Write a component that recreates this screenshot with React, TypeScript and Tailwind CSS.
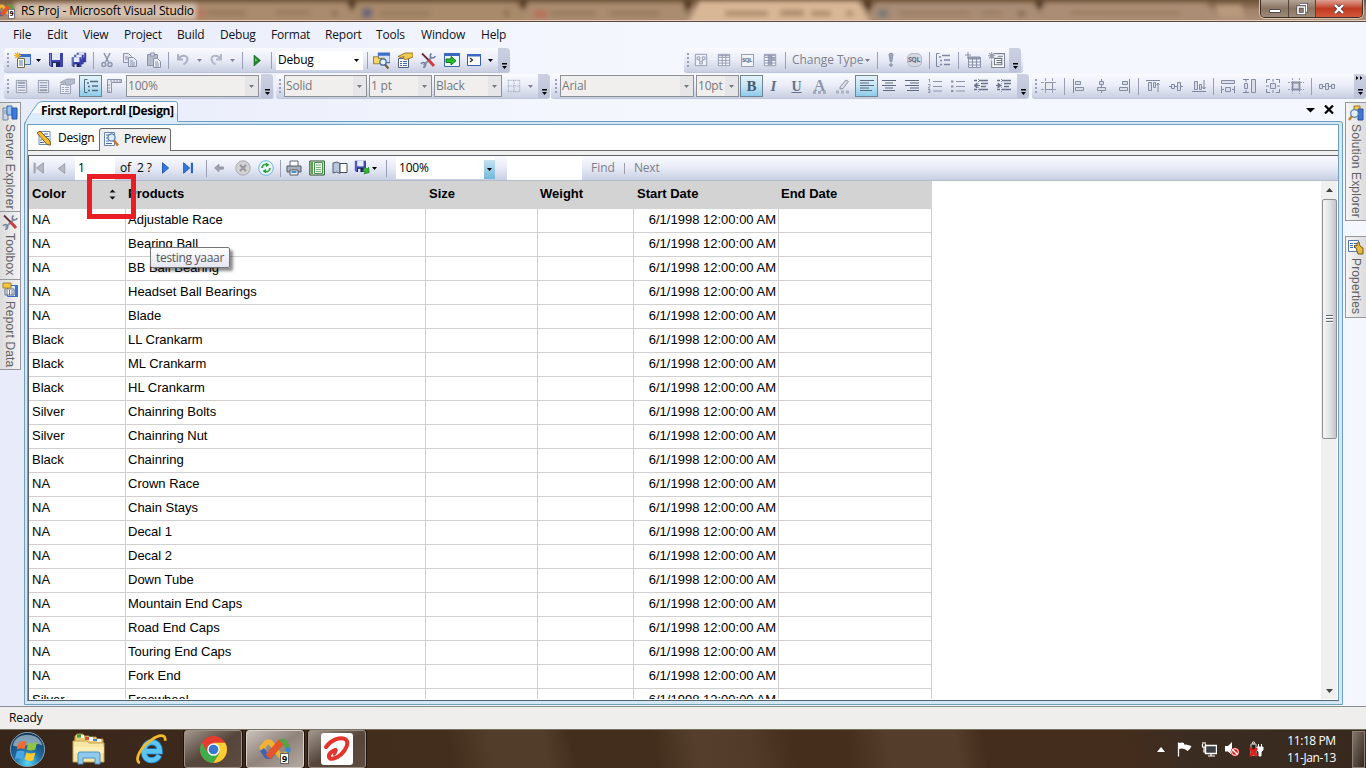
import React from "react";

type Kids = { children?: React.ReactNode };

const UI = "font-['Open_Sans','Noto_Sans',sans-serif]";

/* ---------- shared toolbar parts ---------- */

function Slot({ w, children }: { w: string } & Kids) {
  return <div className={`flex h-full shrink-0 items-center justify-center ${w}`}>{children}</div>;
}

function Ico({ children, s = "size-4" }: { s?: string } & Kids) {
  return (
    <svg viewBox="0 0 16 16" className={`shrink-0 ${s}`} fill="none" stroke="#8b92ab" strokeWidth="1">
      {children}
    </svg>
  );
}

function Sep({ w }: { w: string }) {
  return (
    <Slot w={w}>
      <div className="h-[17px] w-px bg-[#9a9fb5]" />
    </Slot>
  );
}

function Grip({ w }: { w: string }) {
  return (
    <Slot w={w}>
      <div className="flex flex-col gap-[2px]">
        {[0, 1, 2, 3].map((i) => (
          <div key={i} className="size-[2px] bg-[#9a9dba]" />
        ))}
      </div>
    </Slot>
  );
}

function Arrow({ color = "#000" }: { color?: string }) {
  return (
    <svg viewBox="0 0 5 3" className="h-[3px] w-[5px] shrink-0" fill={color}>
      <path d="M0 0h5L2.5 3z" />
    </svg>
  );
}

function Overflow({ w, dots }: { w: string; dots?: boolean }) {
  return (
    <div className={`flex h-full shrink-0 flex-col items-center justify-end rounded-r-[3px] bg-linear-to-b from-[#ccd1e1] to-[#bcc3d9] pb-[2px] ${w}`}>
      <svg viewBox="0 0 8 21" className="h-[21px] w-2" fill="#000">
        {dots && <path d="M0 1l2.4 2L0 5zM4 1l2.4 2L4 5z" />}
        <path d="M2 14h5v1.4H2zM2 17h5l-2.5 3z" />
      </svg>
    </div>
  );
}

function Strip({ w, children }: { w: string } & Kids) {
  return (
    <div className={`flex h-[25px] shrink-0 items-center overflow-hidden rounded-[3px] border-b border-[#bfc5da] bg-linear-to-b from-[#fafbff] via-[#e9ecf7] to-[#c9cfe2] ${w}`}>
      {children}
    </div>
  );
}

function GrayCombo({ w, text }: { w: string; text: string }) {
  return (
    <div className={`flex h-[22px] shrink-0 items-stretch border border-[#8e9097] bg-[#f0efee] ${w}`}>
      <div className="flex-1 pl-[1px] text-[12px] leading-[19px] tracking-[-0.2px] text-[#76777c]">{text}</div>
      <div className="flex w-[13px] items-center justify-center bg-[#e6e6e8]">
        <Arrow color="#77797f" />
      </div>
    </div>
  );
}

function Lit({ children }: Kids) {
  return (
    <div className="flex h-[22px] w-[23px] items-center justify-center border border-[#6e8494] bg-linear-to-b from-[#e5f2fa] via-[#c3e4f3] to-[#8ccbe8]">
      {children}
    </div>
  );
}

/* ---------- icons ---------- */

const NewProject = () => (
  <svg viewBox="0 0 17 16" className="h-4 w-[17px]">
    <path d="M4.500 2.500h12v10h-12z" fill="#c9dcf7" stroke="#416bb8" />
    <path d="M4 2h13v3H4z" fill="#3c6cc9" />
    <path d="M3.500 6.500h7v9h-7z" fill="#fffdf0" stroke="#746a43" />
    <path d="M5 9h4M5 11h4M5 13h4" stroke="#4a71b5" />
    <path d="M3.500 0v7M0 3.500h7M1 1l5 5M6 1L1 6" stroke="#f0b429" strokeWidth="1.200" />
  </svg>
);

const Floppy = ({ dx = 0, dy = 0, k = 1 }: { dx?: number; dy?: number; k?: number }) => (
  <g transform={`translate(${dx} ${dy}) scale(${k})`} stroke="none">
    <path d="M1 1h14v14H3l-2-2z" fill="#3d44ae" />
    <path d="M2 2h1v11H2z" fill="#8188dc" />
    <path d="M4 1h8v7H4z" fill="#e4eaff" />
    <path d="M4 10h8v5H4z" fill="#20265f" />
    <path d="M5 11h3v4H5z" fill="#d9def4" />
  </g>
);

const Save = () => <Ico><Floppy /></Ico>;
const SaveAll = () => (
  <Ico>
    <Floppy dx={5} dy={0} k={0.68} />
    <Floppy dx={2.500} dy={2} k={0.68} />
    <Floppy dx={0} dy={4.500} k={0.7} />
  </Ico>
);

const Cut = () => (
  <Ico>
    <path d="M5 1l4.500 9M11 1L6.500 10" strokeWidth="1.500" />
    <circle cx="4.800" cy="12.500" r="2" strokeWidth="1.400" />
    <circle cx="11" cy="12.500" r="2" strokeWidth="1.400" />
  </Ico>
);
const Copy = () => (
  <Ico>
    <path d="M1.500 1.500h5l3 3v6h-8z" fill="#e5e8f2" />
    <path d="M6.500 5.500h5l3 3v6h-8z" fill="#e5e8f2" />
    <path d="M8 9h3M8 11h5M8 13h5M3 5h3M3 7h3" />
  </Ico>
);
const Paste = () => (
  <Ico>
    <path d="M1.500 2.500h10v11h-10z" fill="#b7bccd" />
    <path d="M4.500 1h4v3h-4z" fill="#d8dbe7" />
    <path d="M7.500 6.500h4l3 3v6h-7z" fill="#eef0f7" />
    <path d="M9 10h3M9 12h4M9 14h4" />
  </Ico>
);
const Undo = () => (
  <Ico>
    <path d="M3 2v5.500h5M3.500 7C6 2 13 3 12.500 7.500c-.2 2-1.500 3.500-4 5" strokeWidth="2" stroke="#a9b0c4" />
  </Ico>
);
const Redo = () => (
  <Ico>
    <path d="M13 2v5.500H8M12.500 7C10 2 3 3 3.500 7.500c.2 2 1.500 3.500 4 5" strokeWidth="2" stroke="#b0b6c9" />
  </Ico>
);
const Play = () => (
  <Ico>
    <path d="M5 3l6.500 5.500L5 14z" fill="#22852b" stroke="#14661c" strokeWidth=".6" />
    <path d="M6 6l2.500 2.500L6 9.500z" fill="#73cf72" stroke="none" />
  </Ico>
);
const FindFolder = () => (
  <Ico s="size-[17px]">
    <path d="M5 1h11v9H5z" fill="#d6e4fa" stroke="#426cb9" />
    <path d="M5 1h11v2.500H5z" fill="#3d70c8" stroke="none" />
    <path d="M.5 4.500h4l1 1.500h5v5H.5z" fill="#f8d76b" stroke="#a28232" />
    <circle cx="9.500" cy="9.500" r="3" fill="#e5f4ff" stroke="#5577a8" strokeWidth="1.300" />
    <path d="M11.500 12l3 3.500" stroke="#70573c" strokeWidth="2" />
  </Ico>
);
const PropHand = ({ gray }: { gray?: boolean }) => (
  <Ico>
    <path d="M1.500 6.500h10v9h-10z" fill={gray ? "#eef0f6" : "#fff"} stroke={gray ? "#9ba1b5" : "#525f7d"} />
    <path d="M3 9.500h2M6 9.500h4M3 11.500h2M6 11.500h4M3 13.500h2M6 13.500h4" stroke={gray ? "#a1a6b9" : "#476cad"} />
    <path d="M1 4.500l3-1.500 4-2h8v4l-5 2-3 .5-2-1 1-2-3 1z" fill={gray ? "#b6bbca" : "#f1ca50"} stroke={gray ? "#959bad" : "#86651e"} strokeWidth=".8" />
  </Ico>
);
const Wrench = () => (
  <Ico>
    <path d="M3.500 13.500L12 5" stroke="#8b9cb6" strokeWidth="2.200" />
    <path d="M11.500 1.500c-2 1.500-1.500 4.500 0 4.500s3.500 0 3.500-2" stroke="#73859e" strokeWidth="1.600" />
    <path d="M1 12c1-2 4-2 4.500 0s-1 3.500-2.500 3.500" stroke="#73859e" strokeWidth="1.600" />
    <path d="M2 1.500l6.500 6.500" stroke="#6b2c3a" strokeWidth="1.800" />
    <path d="M8.500 8l5.500 6" stroke="#cd3b43" strokeWidth="3" />
  </Ico>
);
const StartPage = () => (
  <Ico>
    <path d="M.5 2.500h15v12H.5z" fill="#eef5ff" stroke="#3b66aa" />
    <path d="M0 1h16v3H0z" fill="#3c67c0" stroke="none" />
    <path d="M2 7h5V4.500l5 4.200-5 4.300v-2.500H2z" fill="#29c02b" stroke="#107819" />
  </Ico>
);
const CommandWin = () => (
  <Ico>
    <path d="M1.500 2.500h13v11h-13z" fill="#fff" stroke="#3b5cac" />
    <path d="M1 2h14v2.500H1z" fill="#3b69c8" stroke="none" />
    <path d="M4 6l2.500 2L4 10" stroke="#222" strokeWidth="1.200" />
  </Ico>
);
const Diagram = () => (
  <Ico s="size-[14px]">
    <path d="M1.500 1.500h13v13h-13z" fill="#f0f2f8" />
    <path d="M3.500 4.500h3v3h-3zM9.500 4.500h3v3h-3zM6.500 9.500h3v3h-3zM5 7.500l2 2M11 7.500l-2 2" />
  </Ico>
);
const GridIcon = ({ dark }: { dark?: boolean }) => (
  <Ico s="size-[14px]">
    <path d="M1.500 1.500h13v13h-13z" fill="#f5f6fa" />
    {dark && <path d="M6 2h4v12H6zM10 5h4v3h-4z" fill="#a3a9bc" stroke="none" />}
    <path d="M2 5h12M2 8.500h12M2 11.500h12M6 2v12M10 2v12M2 3h12" />
  </Ico>
);
const SqlBox = () => (
  <div className="flex h-[13px] w-[13px] items-center justify-center overflow-hidden border border-[#9ba1b5] bg-[#f0f2f8] text-[6px] font-bold tracking-[-0.5px] text-[#656c82]">SQL</div>
);
const SqlCheck = () => (
  <div className="flex h-[14px] w-[15px] items-center justify-center rounded-[5px] border border-[#b3b8c8] bg-[#d5d9e4] text-[7px] font-bold tracking-[-0.4px] text-[#666d82]">SQL</div>
);
const Tree = ({ c = "#7d87a2" }: { c?: string }) => (
  <Ico>
    <path d="M4.500 1.500h-3v13h3" stroke={c} />
    <path d="M4 5h2M5 8.500h2M5 12.500h2M7 3.500h8M9 8h6M9 12.500h6" stroke={c} strokeWidth="1.300" />
  </Ico>
);
const AddTable = () => (
  <Ico>
    <path d="M3.500 5.500h12v10h-12z" fill="#edeff6" />
    <path d="M3 5h12v2H3z" fill="#9197ab" />
    <path d="M4 10h11M4 13h11M7.500 7v8M11.500 7v8M3 0v6M0 3h6" />
  </Ico>
);
const AddGroup = () => (
  <Ico s="size-[17px]">
    <path d="M5.500 1.500h10v13h-12V8" fill="#fff" stroke="#7c8295" />
    <path d="M6 6h7v6H6zM8 8h5M8 10h5M9 4h5" stroke="#6c7387" />
    <path d="M3.500 0v7M0 3.500h7M1 1l5 5M6 1L1 6" stroke="#969cae" />
  </Ico>
);
const Page = ({ flip }: { flip?: boolean }) => (
  <Ico s="size-[15px]">
    <path d="M2.500 1.500h11v13h-11z" fill="#e7e9f1" stroke="#9499ac" />
    <path d={flip ? "M4 11h8v2H4z" : "M4 3h8v2H4z"} fill="#959bb0" stroke="none" />
    <path d="M4 7h8M4 9h8" />
    {flip ? <path d="M4 4h8" /> : <path d="M4 12h8" />}
  </Ico>
);
const Ruler = () => (
  <Ico>
    <path d="M1.500 1.500h14v3h-10v10h-4z" fill="#e7e9f1" />
    <path d="M5 2v2M8 2v2M11 2v2M14 2v2M2 7h2M2 10h2M2 13h2" />
  </Ico>
);
const Borders = () => (
  <Ico s="size-[14px]">
    <path d="M1 1.500h14M1 8h14M1 14.500h14M1.500 1v14M8 1v14M14.500 1v14" strokeDasharray="1 1" />
  </Ico>
);
const Lines = ({ kind }: { kind: "l" | "c" | "r" }) => (
  <Ico>
    <path
      stroke="#5b6880"
      strokeWidth="1.200"
      d={
        kind === "l"
          ? "M1 2.500h14M1 5h9M1 7.500h14M1 10h9M1 12.500h12"
          : kind === "c"
          ? "M1 2.500h14M4 5h8M1 7.500h14M4 10h8M2 12.500h12"
          : "M1 2.500h14M6 5h9M1 7.500h14M6 10h9M3 12.500h12"
      }
    />
  </Ico>
);
const ListIcon = ({ num }: { num?: boolean }) => (
  <Ico>
    <path d="M6 3.500h9M6 8.500h9M6 13h9" />
    {num ? (
      <path d="M1.500 2l1-1v3.500M1 6.500h2v1.500L1 10h2M1 11.500h2v3H1M1.500 13H3" strokeWidth=".9" />
    ) : (
      <path d="M1 3.500h2.500M1 8.500h2.500M1 13h2.500" strokeWidth="2" />
    )}
  </Ico>
);
const Indent = ({ right }: { right?: boolean }) => (
  <Ico>
    <path d="M1 2.500h3M6 2.500h9M8 5.500h7M8 8.500h5M6 11.500h9M1 11.500h3" stroke="#69738b" strokeWidth="1.400" />
    <path d="M5.500 1v14" strokeDasharray="1 1" />
    <path d={right ? "M2 5L5 7.500 2 10zM0 7.500h3" : "M4 5L1 7.500 4 10zM3 7.500h4"} fill="#69738b" stroke="#69738b" />
  </Ico>
);
const Brush = () => (
  <Ico>
    <path d="M5 9l6-7 2.500 1.500L8 10.500l-3 .5z" fill="#dcdfe9" />
    <path d="M1 12.500h3v3H1zM6 12.500h3v3H6zM11 12.500h3v3h-3z" fill="#adb2c2" stroke="none" />
  </Ico>
);
const FontColor = () => (
  <div className="flex flex-col items-center">
    <span className="h-[12px] font-['Liberation_Serif',serif] text-[16px] leading-[13px] font-bold text-[#8f96ab]">A</span>
    <div className="flex gap-[2px]">
      <div className="size-[3px] bg-[#a7acbe]" />
      <div className="size-[3px] bg-[#a7acbe]" />
      <div className="size-[3px] bg-[#a7acbe]" />
    </div>
  </div>
);
const Align = ({ d, f }: { d: string; f?: string }) => (
  <Ico>
    <path d={d} stroke="#7f869f" />
    {f && <path d={f} fill="#dadeea" stroke="#858ca3" />}
  </Ico>
);
const SnapGrid = ({ fat }: { fat?: boolean }) => (
  <Ico>
    <path d="M4.500 0v16M11.500 0v16M0 4.500h16M0 11.500h16" strokeDasharray={fat ? "2 1" : "3 1"} stroke="#9ba1b5" />
    <path d="M4.500 4.500h7v7h-7z" fill={fat ? "#d9dce7" : "#e9ebf3"} stroke="#868da4" strokeWidth={fat ? 1.800 : 1} />
  </Ico>
);

/* ---------- window title ---------- */

function VsLogo({ s }: { s: string }) {
  return (
    <svg viewBox="0 0 32 22" className={s} fill="none" strokeWidth="5" strokeLinejoin="round">
      <path d="M5 12L3 9l5-5.500h3l6 7" stroke="#f2b233" />
      <path d="M3 11l5 7h3l5-6" stroke="#3e63b8" />
      <path d="M20 5l2-2h3l4 6" stroke="#57a244" />
      <path d="M29 9v3l-4 6" stroke="#3f86cf" />
      <path d="M16 11l6 7h3l3-4" stroke="#e8b62e" />
      <path d="M9 18.500L22 3.500" stroke="#e4552a" strokeWidth="6.500" />
    </svg>
  );
}

function TitleBar() {
  return (
    <header className="relative flex h-[22px] shrink-0 overflow-hidden border-b border-[#5c4a42] bg-linear-to-b from-[#6e5338] via-[#a1826a] to-[#ab8f76]">
      <svg viewBox="0 0 1366 21" className="absolute inset-0 h-[21px] w-[1366px]">
        <defs>
          <filter id="soft" x="-10%" y="-100%" width="120%" height="300%"><feGaussianBlur stdDeviation="2.500" /></filter>
        </defs>
        <g filter="url(#soft)">
          <path d="M185 3h162l10 20H180z" fill="#aa8b6d" />
          <path d="M354 3h162l10 20H350z" fill="#a98a6b" />
          <path d="M526 3h160l8 20H522z" fill="#ab8c70" />
          <path d="M699 1h160l12 24H688z" fill="#d8b796" />
          <path d="M876 3h158l8 20H868z" fill="#a98d74" />
          <path d="M1045 3h162l10 20h-175z" fill="#ab8d74" />
          <path d="M1215 5h26l4 13h-26z" fill="#b99a7c" />
          <path d="M346 0h12l-6 12zM519 0h10l-5 11zM692 0h-10l5 15zM862 0h10l-3 14zM1034 0h10l-5 11z" fill="#4f351c" />
          <path d="M206 10h40v6h-40zM276 10h34v5h-34zM380 11h50v5h-50zM550 11h46v5h-46zM610 11h50v5h-50zM900 11h70v4h-70zM982 11h20v4h-20zM1070 11h110v4h-110z" fill="#917359" opacity=".7" />
          <path d="M725 11h43v5h-43zM780 10h24v6h-24zM811 11h20v5h-20zM846 11h7v5h-7z" fill="#9a7759" opacity=".75" />
          <path d="M197 9h7v9h-7zM534 10h13v8h-13z" fill="#bb6a55" opacity=".8" />
          <path d="M362 8h10v10h-10z" fill="#6d6679" />
          <path d="M878 9h10v9h-10z" fill="#7e7a76" />
          <path d="M504 11h5v5h-5zM332 11h5v5h-5zM1018 11h7v5h-7z" fill="#846850" />
          <path d="M14 3h182v16H14z" fill="#d5c0ae" />
        </g>
        <path d="M0 20.500h1366" stroke="#e4cfbc" />
      </svg>
      <div className="relative flex h-[21px] flex-1 items-center">
        <div className="relative w-[21px]">
          <VsLogo s="-ml-1 h-[15px] w-[19px]" />
          <span className="absolute top-[6px] left-[8px] h-[10px] w-[7px] border border-[#777] bg-white text-center text-[7px] leading-[8px] font-bold">9</span>
        </div>
        <span className="text-[12px] tracking-[-0.14px] text-black">RS Proj - Microsoft Visual Studio</span>
      </div>
      <div className="relative mr-[3px] flex h-[18px] overflow-hidden rounded-b-[5px] border border-t-0 border-[#3e2e26] shadow-[0_0_0_1px_#d4c0ad]">
        <div className="flex w-7 items-center justify-center border-r border-[#54443a] bg-linear-to-b from-[#b5a598] via-[#8a7462] to-[#9d8a79]">
          <div className="mt-1 h-[4px] w-[12px] rounded-[1px] border border-[#4d4b51] bg-white" />
        </div>
        <div className="flex w-[27px] items-center justify-center border-r border-[#54443a] bg-linear-to-b from-[#b5a598] via-[#8a7462] to-[#9d8a79]">
          <svg viewBox="0 0 12 12" className="size-3" fill="none">
            <path d="M4 1.500h6.500V8H9" stroke="#494950" strokeWidth="3" />
            <path d="M4 1.500h6.500V8H9" stroke="#fff" strokeWidth="1.400" />
            <path d="M2 4h6.500v6.500H2z" stroke="#494950" strokeWidth="3" />
            <path d="M2 4h6.500v6.500H2z" stroke="#fff" strokeWidth="1.600" />
          </svg>
        </div>
        <div className="flex w-[46px] items-center justify-center bg-linear-to-b from-[#dda092] via-[#c03a20] to-[#d4573a]">
          <svg viewBox="0 0 12 10" className="h-[10px] w-3">
            <path d="M2 1l8 8M10 1L2 9" stroke="#52434b" strokeWidth="4" />
            <path d="M2 1l8 8M10 1L2 9" stroke="#fff" strokeWidth="2.400" />
          </svg>
        </div>
      </div>
    </header>
  );
}

/* ---------- menu + toolbars ---------- */

function MenuBar() {
  return (
    <nav className="flex h-[26px] shrink-0 pl-[13px] text-[12px] leading-[26px] tracking-[-0.2px] text-[#12121c]">
      <span className="w-[34px]">File</span>
      <span className="w-[36px]">Edit</span>
      <span className="w-[41px]">View</span>
      <span className="w-[53px]">Project</span>
      <span className="w-[43px]">Build</span>
      <span className="w-[51px]">Debug</span>
      <span className="w-[54px]">Format</span>
      <span className="w-[51px]">Report</span>
      <span className="w-[45px]">Tools</span>
      <span className="w-[60px]">Window</span>
      <span>Help</span>
    </nav>
  );
}

function ToolbarTop() {
  return (
    <div className="flex h-[26px] shrink-0 pl-1">
      <Strip w="w-[506px]">
        <Grip w="w-[7px]" />
        <Slot w="w-[22px]"><NewProject /></Slot>
        <Slot w="w-[10px]"><Arrow /></Slot>
        <Slot w="w-[26px]"><Save /></Slot>
        <Slot w="w-[19px]"><SaveAll /></Slot>
        <Sep w="w-[11px]" />
        <Slot w="w-4"><Cut /></Slot>
        <Slot w="w-[30px]"><Copy /></Slot>
        <Slot w="w-[18px]"><Paste /></Slot>
        <Sep w="w-[11px]" />
        <Slot w="w-[18px]"><Undo /></Slot>
        <Slot w="w-[14px]"><Arrow color="#80869b" /></Slot>
        <Slot w="w-5"><Redo /></Slot>
        <Slot w="w-[13px]"><Arrow color="#80869b" /></Slot>
        <Sep w="w-[7px]" />
        <Slot w="w-[21px]"><Play /></Slot>
        <Sep w="w-[9px]" />
        <div className="flex h-[19px] w-[87px] shrink-0 items-center bg-white pr-1 pl-[2px]">
          <span className="flex-1 text-[12px] tracking-[-0.2px]">Debug</span>
          <Arrow />
        </div>
        <Sep w="w-[9px]" />
        <Slot w="w-[19px]"><FindFolder /></Slot>
        <Slot w="w-[28px]"><PropHand /></Slot>
        <Slot w="w-[18px]"><Wrench /></Slot>
        <Slot w="w-[29px]"><StartPage /></Slot>
        <Slot w="w-4"><CommandWin /></Slot>
        <Slot w="w-[16px]"><Arrow /></Slot>
        <Overflow w="w-[12px]" />
      </Strip>
      <Strip w="ml-[174px] w-[339px]">
        <Grip w="w-[7px]" />
        <Slot w="w-5"><Diagram /></Slot>
        <Slot w="w-[26px]"><GridIcon /></Slot>
        <Slot w="w-5"><SqlBox /></Slot>
        <Slot w="w-[26px]"><GridIcon dark /></Slot>
        <Sep w="w-[5px]" />
        <div className="w-[75px] shrink-0 pl-1 text-[12px] tracking-[-0.05px] whitespace-nowrap text-[#7f828d]">Change Type</div>
        <Slot w="w-[9px]"><Arrow color="#777b88" /></Slot>
        <Sep w="w-[10px]" />
        <Slot w="w-[18px]">
          <Ico><path d="M6 2.500C6 .8 10 .8 10 2.500L8.700 10H7.300z" fill="#a0a6b9" /><circle cx="8" cy="13" r="1.300" fill="#a0a6b9" /></Ico>
        </Slot>
        <Slot w="w-[28px]"><SqlCheck /></Slot>
        <Sep w="w-[3px]" />
        <Slot w="w-6"><Tree /></Slot>
        <Sep w="w-[7px]" />
        <Slot w="w-[22px]"><AddTable /></Slot>
        <Slot w="w-6"><AddGroup /></Slot>
        <div className="w-px shrink-0" />
        <Overflow w="w-[12px]" />
      </Strip>
    </div>
  );
}

function ToolbarBottom() {
  return (
    <div className="flex h-[27px] shrink-0 pl-1">
      <Strip w="w-[270px]">
        <Grip w="w-[7px]" />
        <Slot w="w-5"><Page /></Slot>
        <Slot w="w-6"><Page flip /></Slot>
        <Slot w="w-6"><PropHand gray /></Slot>
        <Slot w="w-[23px]"><Lit><Tree c="#566a80" /></Lit></Slot>
        <Slot w="w-6"><Ruler /></Slot>
        <GrayCombo w="w-[133px]" text="100%" />
        <div className="w-[2px] shrink-0" />
        <Overflow w="w-[12px]" />
      </Strip>
      <Strip w="ml-[2px] w-[274px]">
        <Grip w="w-2" />
        <GrayCombo w="w-[83px]" text="Solid" />
        <GrayCombo w="ml-[2px] w-[63px]" text="1 pt" />
        <GrayCombo w="ml-[2px] w-[68px]" text="Black" />
        <Slot w="w-6"><Borders /></Slot>
        <Slot w="w-2"><Arrow color="#7b8092" /></Slot>
        <div className="w-1 shrink-0" />
        <Overflow w="w-[12px]" />
      </Strip>
      <Strip w="ml-[1px] w-[478px]">
        <Grip w="w-[9px]" />
        <GrayCombo w="w-[134px]" text="Arial" />
        <GrayCombo w="ml-[2px] w-[43px]" text="10pt" />
        <Slot w="ml-[1px] w-[23px]"><Lit><b className="font-['Liberation_Serif',serif] text-[15px] text-[#48586e]">B</b></Lit></Slot>
        <Slot w="w-[21px]"><i className="font-['Liberation_Serif',serif] text-[15px] font-bold text-[#677189]">I</i></Slot>
        <Slot w="w-[25px]"><span className="font-['Liberation_Serif',serif] text-[14px] font-bold text-[#677189] underline">U</span></Slot>
        <Slot w="w-[21px]"><FontColor /></Slot>
        <Slot w="w-[25px]"><Brush /></Slot>
        <Slot w="w-[23px]"><Lit><Lines kind="l" /></Lit></Slot>
        <Slot w="w-[22px]"><Lines kind="c" /></Slot>
        <Slot w="w-6"><Lines kind="r" /></Slot>
        <Slot w="w-[22px]"><ListIcon num /></Slot>
        <Slot w="w-6"><ListIcon /></Slot>
        <Slot w="w-[22px]"><Indent /></Slot>
        <Slot w="w-6"><Indent right /></Slot>
        <div className="w-px shrink-0" />
        <Overflow w="w-[12px]" />
      </Strip>
      <Strip w="ml-[3px] w-[334px]">
        <Grip w="w-[7px]" />
        <Slot w="w-5"><SnapGrid /></Slot>
        <Sep w="w-[10px]" />
        <Slot w="w-[19px]"><Align d="M2.500 1v14" f="M4.500 3.500h5v3h-5zM4.500 9.500h8v3h-8z" /></Slot>
        <Slot w="w-[26px]"><Align d="M8.500 1v14" f="M6.500 3.500h4v3h-4zM4.500 9.500h8v3h-8z" /></Slot>
        <Slot w="w-[20px]"><Align d="M13.500 1v14" f="M6.500 3.500h5v3h-5zM3.500 9.500h8v3h-8z" /></Slot>
        <Sep w="w-[9px]" />
        <Slot w="w-[19px]"><Align d="M1 2.500h14M13 5v9M11.500 7L13 5l1.500 2" f="M3.500 4.500h3v8h-3zM8.500 4.500h2v5h-2z" /></Slot>
        <Slot w="w-[27px]"><Align d="M1 8.500h14" f="M3.500 6.500h3v4h-3zM9.500 4.500h3v8h-3z" /></Slot>
        <Slot w="w-[20px]"><Align d="M1 13.500h14M13 2v9M11.500 9L13 11l1.500-2" f="M3.500 3.500h3v8h-3zM8.500 6.500h2v5h-2z" /></Slot>
        <Sep w="w-[9px]" />
        <Slot w="w-[19px]"><Align d="M1.500 8v7M14.500 8v7M2 11.500h2M12 11.500h2" f="M1.500 2.500h13v3h-13zM5.500 9.500h5v4h-5z" /></Slot>
        <Slot w="w-[26px]"><Align d="M1 1.500h6M1 14.500h6M4 2v2M4 12v2" f="M9.500 1.500h4v13h-4zM2.500 5.500h3v5h-3z" /></Slot>
        <Slot w="w-[20px]"><Align d="M1.500 5V1.500H5M11 1.500h3.500V5M14.500 11v3.500H11M5 14.500H1.500V11M8 1v3M8 12v3M1 8h3M12 8h3" f="M5.500 5.500h5v5h-5z" /></Slot>
        <Slot w="w-[26px]"><SnapGrid fat /></Slot>
        <Sep w="w-[5px]" />
        <Slot w="w-[26px]"><Align d="M1 8.500h14" f="M.5 6.500h3v4h-3zM6.500 5.500h3v6h-3zM12.500 6.500h3v4h-3z" /></Slot>
        <div className="w-[14px] shrink-0" />
        <Overflow w="w-[12px]" dots />
      </Strip>
    </div>
  );
}

/* ---------- docked side tabs ---------- */

function SideTab({ h, right, text, icon }: { h: string; right?: boolean; text: string; icon: React.ReactNode }) {
  return (
    <div className={`flex shrink-0 flex-col items-center gap-[3px] border border-[#95979c] pt-[2px] ${right ? "w-[21px] border-r-0 bg-linear-to-r from-[#f5f5f5] to-[#dcdcdc]" : "w-[21px] border-l-0 bg-linear-to-r from-[#dcdcdc] to-[#f3f3f3]"} ${h}`}>
      {icon}
      <span className="font-['Liberation_Sans',sans-serif] text-[12px] leading-[14px] tracking-[0.15px] whitespace-nowrap text-[#5f6064] [writing-mode:vertical-rl]">{text}</span>
    </div>
  );
}

function LeftDock() {
  return (
    <aside className="flex w-6 shrink-0 flex-col pt-[1px]">
      <SideTab h="h-[110px] -mb-px" text="Server Explorer" icon={
        <Ico><path d="M1 3h5v12H1z" fill="#cbd5e3" stroke="#74839a" /><path d="M2 6h3M2 8h3" /><path d="M5 1h5v9H5z" fill="#9ac1f2" stroke="#356ab6" /><path d="M10 3h5v11h-5z" fill="#3d7be0" stroke="#2a57a6" /></Ico>
      } />
      <SideTab h="h-[69px] -mb-px" text="Toolbox" icon={<Wrench />} />
      <SideTab h="h-[91px]" text="Report Data" icon={
        <Ico><path d="M5.500 3.500h10v11h-10z" fill="#dbe8fd" stroke="#3e6bb9" /><path d="M13 3h3v12h-3z" fill="#3c73d2" stroke="none" /><path d="M3 7h9v6H3z" fill="#fff" stroke="#63718a" /><path d="M5 8v5M7.500 8v5M10 8v5" stroke="#63718a" /><path d="M1 1h8v5H1z" fill="#f2c93c" stroke="#a3812a" /></Ico>
      } />
    </aside>
  );
}

function RightDock() {
  return (
    <aside className="flex flex-1 flex-col items-end gap-[15px] pt-[1px]">
      <SideTab right h="h-[119px]" text="Solution Explorer" icon={
        <Ico><path d="M6 1h6v6H6z" fill="#f1c84a" stroke="#98772c" /><path d="M10 4h5v11h-5z" fill="#3f77d4" stroke="#2c559c" /><circle cx="6.500" cy="8.500" r="3.800" fill="#def0fd" stroke="#6284b0" strokeWidth="1.300" /><path d="M4 11l-3 4" stroke="#c57e2e" strokeWidth="2.200" /></Ico>
      } />
      <SideTab right h="h-[82px]" text="Properties" icon={
        <Ico><path d="M.5 1.500h10v11H.5z" fill="#fff" stroke="#5675aa" /><path d="M2 4.500h3M6 4.500h3M2 6.500h3M6 6.500h3M2 8.500h3M6 8.500h3" stroke="#3f69b3" /><path d="M8 9l-2-2 1-1 2 1V4l2-1 1 4 3 2v6h-5z" fill="#e8b83b" stroke="#745b25" /></Ico>
      } />
    </aside>
  );
}

/* ---------- report ---------- */

const rows: [string, string][] = [
  ["NA", "Adjustable Race"], ["NA", "Bearing Ball"], ["NA", "BB Ball Bearing"], ["NA", "Headset Ball Bearings"],
  ["NA", "Blade"], ["Black", "LL Crankarm"], ["Black", "ML Crankarm"], ["Black", "HL Crankarm"],
  ["Silver", "Chainring Bolts"], ["Silver", "Chainring Nut"], ["Black", "Chainring"], ["NA", "Crown Race"],
  ["NA", "Chain Stays"], ["NA", "Decal 1"], ["NA", "Decal 2"], ["NA", "Down Tube"],
  ["NA", "Mountain End Caps"], ["NA", "Road End Caps"], ["NA", "Touring End Caps"], ["NA", "Fork End"],
  ["Silver", "Freewheel"],
];

const cols = "grid grid-cols-[97px_300px_112px_96px_145px_153px]";

function ReportGrid() {
  const cell = "border-r border-b border-[#d0d0d0] pl-[2px]";
  return (
    <div className="relative h-[518px] w-[903px] font-['Liberation_Sans',Arial,sans-serif] text-[13px] text-black">
      <div className="h-full overflow-hidden">
        <div className={`${cols} h-[28px] bg-[#d3d3d3] leading-[25px] font-bold`}>
          <div className="pl-[3px]">Color</div>
          <div className="pl-[2px]">Products</div>
          <div className="pl-[3px]">Size</div>
          <div className="pl-[2px]">Weight</div>
          <div className="pl-[3px]">Start Date</div>
          <div className="pl-[2px]">End Date</div>
        </div>
        {rows.map(([color, name]) => (
          <div key={name} className={`${cols} h-6 leading-[22px]`}>
            <div className={`${cell} pl-[3px]`}>{color}</div>
            <div className={cell}>{name}</div>
            <div className={cell} />
            <div className={cell} />
            <div className={`${cell} pr-[2px] text-right`}>6/1/1998 12:00:00 AM</div>
            <div className={cell} />
          </div>
        ))}
      </div>
      <svg viewBox="0 0 7 11" className="absolute top-[8px] left-[80px] h-[11px] w-[7px]"><path d="M0.500 3.500L3.500 0.500l3 3zM0.500 7.500l3 3 3-3z" fill="#111" /></svg>
      <div className="absolute top-[-7px] left-[58px] h-[45px] w-[49px] border-[5px] border-[#ea1c24]" />
      <div className={`absolute top-[66px] left-[121px] h-[21px] w-[80px] rounded-[2px] border border-[#767676] bg-linear-to-b from-white to-[#e4e5f0] text-center text-[12px] leading-[19px] tracking-[-0.3px] text-[#575757] shadow-[3px_3px_3px_rgba(0,0,0,0.45)] ${UI}`}>testing yaaar</div>
    </div>
  );
}

function ReportToolbar() {
  return (
    <div className="flex h-[25px] w-full shrink-0 items-center border-b border-[#b7bccb] bg-linear-to-b from-[#fafbff] via-[#e7eaf6] to-[#c9cfe3] text-[12px]">
      <Slot w="w-[19px]"><Ico s="size-[14px]"><path d="M3 2v12" strokeWidth="2.500" stroke="#a2a5ae" /><path d="M13 2v12L5 8z" fill="#b6b9c0" stroke="#9598a0" /></Ico></Slot>
      <Slot w="w-[27px]"><Ico s="size-[13px]"><path d="M12 2v12L4 8z" fill="#b6b9c0" stroke="#9598a0" /></Ico></Slot>
      <div className="flex h-6 w-10 shrink-0 items-center bg-white pl-[3px]">1</div>
      <span className="w-[44px] shrink-0 pl-[5px] tracking-[-0.1px] whitespace-pre">of  2 ?</span>
      <Slot w="w-[14px]"><Ico s="size-[14px]"><path d="M4 2v12l7-6z" fill="#2e78e4" stroke="#1c50b0" /></Ico></Slot>
      <Slot w="w-[29px]"><Ico s="size-[14px]"><path d="M3 2v12l7-6z" fill="#2e78e4" stroke="#1c50b0" /><path d="M12.500 2v12" stroke="#2463cd" strokeWidth="2.500" /></Ico></Slot>
      <Sep w="w-[9px]" />
      <Slot w="w-[16px]"><Ico s="size-[12px]"><path d="M2 8l6-5v3.500h6v3H8V13z" fill="#9da1ab" stroke="#8d919b" /></Ico></Slot>
      <Slot w="w-[31px]"><Ico><circle cx="8" cy="8" r="7.200" fill="#d2d2d4" stroke="#aaabb0" /><path d="M5 5l6 6M11 5l-6 6" stroke="#96979c" strokeWidth="2" /></Ico></Slot>
      <Slot w="w-[15px]"><Ico><circle cx="8" cy="8" r="7.300" fill="#e8f5fb" stroke="#6eb5d7" /><path d="M4 8c0-3 3-4.500 5.500-3.200M12 8c0 3-3 4.500-5.500 3.200" stroke="#3da740" strokeWidth="1.800" /><path d="M8 2.500L11.500 5 8 7zM8 13.500L4.500 11 8 9z" fill="#2f9b35" stroke="none" /></Ico></Slot>
      <Sep w="w-[15px]" />
      <Slot w="w-[12px]"><Ico><path d="M4 1h8v6H4z" fill="#fff" stroke="#667" /><path d="M1 6h14v6H1z" fill="#aab0bb" stroke="#555b66" /><path d="M4 10h8v5H4z" fill="#eef6ff" stroke="#555b66" /><path d="M5.500 12h5" stroke="#4a8bd1" strokeWidth="2" /></Ico></Slot>
      <Slot w="w-[34px]"><Ico><path d="M.8 1h14.500v14H.8z" fill="#fff" stroke="#1f4a24" /><path d="M1.500 2H4v12H1.500z" fill="#58a354" stroke="none" /><path d="M5.500 2.500h8v11h-8z" fill="#f1f8ef" stroke="#469345" /><path d="M7 5h5M7 7.500h5M7 9.500h5M7 11.500h5" stroke="#5b9a60" strokeWidth=".8" /></Ico></Slot>
      <Slot w="w-[11px]"><Ico><path d="M1 3l4-1 3 1.500v10L5 12l-4 1z" fill="#b5c7d9" stroke="#555f72" /><path d="M8 3.500h7v9H8z" fill="#fff" stroke="#444c5b" /></Ico></Slot>
      <div className="w-[7px] shrink-0" />
      <Slot w="w-[19px]"><Ico><Floppy k={0.8} /><path d="M9 8.500h3V6.500l3.500 4-3.500 4v-2H9z" fill="#35b735" stroke="#1a7d25" strokeWidth=".7" transform="rotate(35 12 11)" /></Ico></Slot>
      <Slot w="w-[6px]"><Arrow /></Slot>
      <Sep w="w-[18px]" />
      <div className="ml-[1px] flex h-[22px] w-[99px] shrink-0 items-center bg-white pl-[3px]">
        <span className="flex-1 tracking-[-0.2px]">100%</span>
        <div className="flex h-[19px] w-[11px] items-center justify-center self-end bg-linear-to-b from-[#c4e2f1] to-[#72b8da]"><Arrow /></div>
      </div>
      <div className="ml-[12px] h-6 w-[75px] shrink-0 bg-white" />
      <span className="ml-[9px] w-[33px] shrink-0 text-[#7e8089]">Find</span>
      <div className="h-[11px] w-px shrink-0 bg-[#9c9fab]" />
      <span className="ml-[9px] shrink-0 tracking-[-0.2px] text-[#7e8089]">Next</span>
    </div>
  );
}

const DesignIcon = () => (
  <Ico>
    <path d="M3 1.500h11v13H3z" fill="#fff" stroke="#6c8bb7" />
    <path d="M8 4h4M9 6.500h4M11 9h2M4 10h2M4 12.500h4" stroke="#496fa9" />
    <path d="M1 3l3-2 10 10 .5 4-3.500-.5z" fill="#f1bc32" stroke="#7f5b1d" />
  </Ico>
);
const PreviewIcon = () => (
  <Ico>
    <path d="M1.500 1.500h10v13h-10z" fill="#fff" stroke="#6685b3" />
    <path d="M3 4h3M3 7h2M3 10h3M3 12.500h6" stroke="#486ba5" />
    <circle cx="8.500" cy="6.500" r="3.600" fill="#d9edfb" stroke="#5c81b0" strokeWidth="1.300" />
    <path d="M11 9.500l4 5" stroke="#c4752c" strokeWidth="2.500" />
  </Ico>
);

function Scrollbar() {
  return (
    <div className="flex h-[518px] w-[16px] flex-col items-center bg-[#f0f0f0]">
      <div className="flex h-[18px] items-center"><svg viewBox="0 0 7 4" className="h-1 w-[7px]"><path d="M0 4h7L3.500 0z" fill="#444" /></svg></div>
      <div className="flex h-[240px] w-[15px] flex-col items-center justify-center gap-px rounded-[2px] border border-[#8d9095] bg-linear-to-r from-[#f5f5f5] via-[#e3e4e5] to-[#c2c4c8]">
        {[0, 1, 2].map((i) => <div key={i} className="h-[2px] w-[7px] border-b border-white bg-[#65686d]" />)}
      </div>
      <div className="flex-1" />
      <div className="flex h-[17px] items-center"><svg viewBox="0 0 7 4" className="h-1 w-[7px]"><path d="M0 0h7L3.500 4z" fill="#444" /></svg></div>
    </div>
  );
}

function Document() {
  return (
    <main className="flex w-[1319px] shrink-0 flex-col">
      <div className="flex h-5 shrink-0 items-start">
        <div className="relative z-10 h-[22px] w-[155px] text-[12px] leading-[20px] font-bold">
          <svg viewBox="0 0 155 24" className="absolute top-0 left-0 h-6 w-[155px]">
            <path d="M1 23C4 17 10 6 14 2Q16 .5 19 .5H151Q153.500 .5 153.500 3V20.500L153.500 23z" fill="#dcecfb" />
            <path d="M5 14C8 10 11 5 14 2Q16 .5 19 .5H151Q153.500 .5 153.500 3V12H5z" fill="#f7fbff" />
            <path d="M.5 24C1 20 8 10 14 2Q16 .5 19 .5H151Q153.500 .5 153.500 3V20" fill="none" stroke="#6fa0c2" />
          </svg>
          <span className="relative pl-[17px] tracking-[-0.38px] whitespace-nowrap">First Report.rdl [Design]</span>
        </div>
        <div className="flex flex-1 items-center justify-end gap-[9px] pr-[9px]">
          <svg viewBox="0 0 9 5" className="mt-[6px] h-[5px] w-[9px]"><path d="M0 0h9L4.500 4.500z" fill="#000" /></svg>
          <svg viewBox="0 0 10 9" className="mt-[4px] h-[9px] w-[10px]"><path d="M1 .5l8 8M9 .5l-8 8" stroke="#000" strokeWidth="2.200" /></svg>
        </div>
      </div>
      <div className="flex h-[584px] flex-col rounded-t-[3px] border border-[#6fa0c2] bg-[#d3e7f7] pt-[2px] pr-[3px] pb-[3px] pl-[2px]">
        <div className="flex flex-1 flex-col overflow-hidden border border-[#6fa0c2] border-b-[#55646e] bg-white">
          <div className="flex h-[26px] shrink-0 items-end border-b border-[#6b6b6b] text-[12px] tracking-[-0.3px]">
            <div className="flex h-[24px] w-[71px] items-center gap-[6px] pl-[8px]"><DesignIcon />Design</div>
            <div className="-mb-px flex h-[23px] w-[72px] items-center gap-[5px] rounded-t-[3px] border border-b-0 border-[#6b6b6b] bg-[#f0f0f0] pb-[2px] pl-[3px]"><PreviewIcon />Preview</div>
          </div>
          <div className="h-1 shrink-0 bg-[#f0f0f0]" />
          <div className="flex flex-1 flex-col border-t border-l border-[#60646a]">
            <ReportToolbar />
            <div className="flex justify-between pr-[1px]">
              <ReportGrid />
              <Scrollbar />
            </div>
          </div>
        </div>
      </div>
    </main>
  );
}

/* ---------- taskbar ---------- */

function TaskButton({ active, children }: { active?: boolean } & Kids) {
  return (
    <div className={`relative flex h-[38px] w-[58px] shrink-0 items-center justify-center rounded-[3px] border shadow-[0_0_0_1px_#1e140d] ${active ? "border-[#d8d0ca] bg-linear-to-br from-[#cbc2bc] via-[#8f837b] to-[#b5aaa2]" : "border-[#9b8e84] bg-linear-to-br from-[#a39990] via-[#55453a] to-[#5d4c40]"}`}>
      {children}
    </div>
  );
}

function Taskbar() {
  return (
    <footer className="flex h-[39px] shrink-0 items-center overflow-hidden border-t border-[#77715f] bg-[linear-gradient(80deg,#38251a_0%,#3d291c_14%,#432d1c_30%,#432d1c_33%,#523c2a_36%,#523c2a_40%,#432d1c_42%,#432d1c_48%,#553f2c_51%,#523b28_55%,#452e1c_58%,#452e1c_62%,#543d2a_65%,#543d2a_70%,#442d1c_72%,#442d1c_82%,#3b2c22_87%,#38291f_100%)]">
      <div className="flex w-[54px] justify-center">
        <svg viewBox="0 0 38 38" className="size-[37px]">
          <defs>
            <radialGradient id="orb" cx=".5" cy=".9" r=".9"><stop offset="0" stopColor="#59d6f5" /><stop offset=".45" stopColor="#1f6da5" /><stop offset="1" stopColor="#12304f" /></radialGradient>
          </defs>
          <circle cx="19" cy="19" r="17.500" fill="url(#orb)" stroke="#89a6b8" />
          <path d="M4 15C6 0 32 0 34 15 25 10 13 19 4 15z" fill="#c7dce8" opacity=".6" />
          <path d="M10 12q4-3 8-1l-2 8q-4-2-8 0z" fill="#ee6a31" />
          <path d="M20 12q4 2 9-1l-2 8q-5 2-9 0z" fill="#8fc640" />
          <path d="M8 21q4-2 8 0l-2 8q-4-2-8 0z" fill="#4aa5e4" />
          <path d="M18 22q4 2 9 0l-2 8q-5 2-9-1z" fill="#fcc92f" />
        </svg>
      </div>
      <div className="flex w-[70px] justify-center">
        <svg viewBox="0 0 34 32" className="h-[32px] w-[34px]">
          <path d="M3 3l2-2h6l1 2h5l1 1h6l1 2h6v20H2z" fill="#e9cc76" stroke="#b08c3d" />
          <path d="M5 1.500h4v3H5z" fill="#30a343" /><path d="M13 4h4v3h-4z" fill="#d9513a" /><path d="M21 6h4v2h-4z" fill="#3e80cc" />
          <path d="M9 2h3v3H9zM17 4h4v4h-4zM25 6h4v3h-4z" fill="#fff" />
          <path d="M1 8h14l2 2h15v19H1z" fill="#f8e6a5" stroke="#c6a04e" />
          <path d="M2 14h30v6H2z" fill="#fff2bf" opacity=".7" />
          <path d="M6 31V21q0-2 2-2h18q2 0 2 2v10h-5v-6H11v6z" fill="#8fc9ec" stroke="#4f91bf" />
        </svg>
      </div>
      <div className="flex w-[54px] justify-center">
        <svg viewBox="0 0 34 34" className="size-[33px]" fill="none">
          <path d="M25 23c-2 4-5 5-8 5-5 0-8-4-8-9 0-6 4-9.500 8.500-9.500 5 0 8 4 8 9.500H10" stroke="#1b7fc2" strokeWidth="6.500" />
          <path d="M25 23c-2 4-5 5-8 5-5 0-8-4-8-9 0-6 4-9.500 8.500-9.500 5 0 8 4 8 9.500H10" stroke="#5cc4f1" strokeWidth="4.800" />
          <path d="M5 31C-2 28 7 13 17 7 24 2 32 0 31 8" stroke="#f4bc29" strokeWidth="2.800" />
        </svg>
      </div>
      <div className="flex gap-[4px] pl-[6px]">
        <TaskButton>
          <svg viewBox="0 0 30 30" className="size-[29px]">
            <circle cx="15" cy="15" r="14" fill="#e43b2e" />
            <path d="M2.900 8A14 14 0 0 0 15 29l6-10.500-6 2.500-6-3z" fill="#3eae4b" />
            <path d="M15 29A14 14 0 0 0 27.100 8H15l6 5v6z" fill="#fccd31" />
            <circle cx="15" cy="15" r="6.500" fill="#fff" /><circle cx="15" cy="15" r="5" fill="#3878cf" />
          </svg>
        </TaskButton>
        <TaskButton active>
          <VsLogo s="h-[23px] w-8" />
          <span className="absolute right-[14px] bottom-[3px] h-[11px] w-[9px] border border-[#666] bg-white text-center text-[9px] leading-[9px] font-bold">9</span>
        </TaskButton>
        <TaskButton>
          <svg viewBox="0 0 32 32" className="size-8" fill="none">
            <rect width="32" height="32" rx="3" fill="#fff" />
            <path d="M5 14C10 7 19 3.500 24 6c5 3 1 11-4 15.500-5 4.500-11 5.500-12 2.500-.8-3 3-6 6.500-7" stroke="#e3352d" strokeWidth="4" strokeLinecap="round" />
            <path d="M14.500 16.500c1.500 0 1 3-1.500 5" stroke="#e3352d" strokeWidth="2.500" strokeLinecap="round" />
          </svg>
        </TaskButton>
      </div>
      <div className="flex-1" />
      <div className="flex items-center">
        <Slot w="w-[18px]"><svg viewBox="0 0 8 5" className="h-[5px] w-2"><path d="M0 5h8L4 0z" fill="#fff" /></svg></Slot>
        <Slot w="w-[28px]"><Ico><path d="M2.500 1.500v14" stroke="#fff" strokeWidth="1.300" /><path d="M3 2q3-1 5 0v1.500h2L15.500 5q-1 3-4 5L8.500 8q-3-1-5.500 0z" fill="#fff" stroke="none" /></Ico></Slot>
        <Slot w="w-[21px]"><Ico><path d="M4.500 4.500h11v8h-11z" fill="#3c4144" stroke="#fff" strokeWidth="1.400" /><path d="M7 15h7M10 12v3M1.500 3v3h3V3M3 6v5h2M2 1v2M4 1v2" stroke="#fff" strokeWidth="1.200" /></Ico></Slot>
        <Slot w="w-[26px]"><Ico><path d="M1 5h3l4-4v13l-4-3.500H1z" fill="#fff" stroke="none" /><circle cx="11" cy="11" r="4" fill="#d32020" stroke="#d32020" strokeWidth="1" /><path d="M8.500 8.500l5 5" stroke="#fff" strokeWidth="1.400" /><circle cx="11" cy="11" r="3.400" stroke="#fff" strokeWidth=".9" /></Ico></Slot>
        <Slot w="w-[21px]"><Ico><path d="M3 3h5v11H3zM4.500 1h2v2h-2z" fill="#28221d" stroke="#d7d1cc" /><path d="M9 6h6v3l-2 2v4h-2v-4L9 9zM10.500 3v3M13.500 3v3" fill="#fff" stroke="#fff" /><path d="M2 7l7 8M9 7l-7 8" stroke="#e51c17" strokeWidth="2.800" /></Ico></Slot>
      </div>
      <div className="ml-[19px] w-[53px] text-center text-[12px] leading-[17px] tracking-[-0.4px] whitespace-nowrap text-white">
        <div>11:18 PM</div>
        <div>11-Jan-13</div>
      </div>
      <div className="mr-[1px] ml-[14px] h-[37px] w-[13px] border border-[#8c8074] bg-linear-to-br from-[#84786c] to-[#33261e]" />
    </footer>
  );
}

export default function App() {
  return (
    <div className={`flex h-[768px] w-[1366px] flex-col overflow-hidden bg-linear-to-r from-[#e7ebfa] via-[#f3f6fd] via-40% to-[#f4f7fd] text-black ${UI}`}>
      <TitleBar />
      <MenuBar />
      <ToolbarTop />
      <ToolbarBottom />
      <div className="flex h-[605px] shrink-0">
        <LeftDock />
        <Document />
        <RightDock />
      </div>
      <div className="h-[23px] shrink-0 border-t border-[#878d94] bg-[#f0eeed] pl-[9px] text-[12px] leading-[22px] tracking-[-0.1px]">Ready</div>
      <Taskbar />
    </div>
  );
}
